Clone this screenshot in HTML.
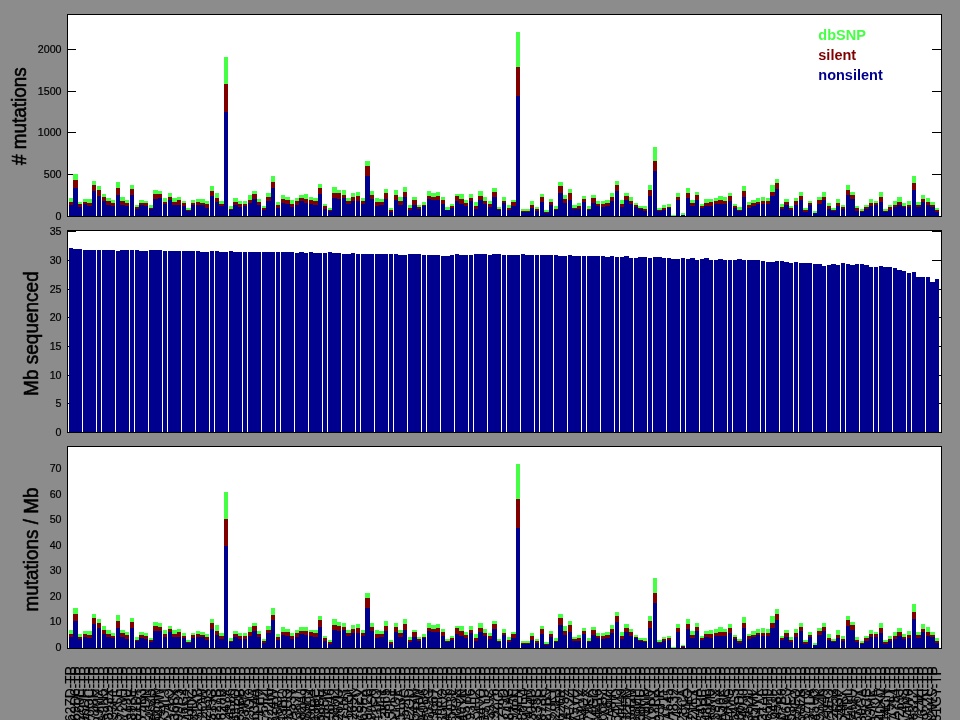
<!DOCTYPE html>
<html><head><meta charset="utf-8"><title>mutation rates</title>
<style>html,body{margin:0;padding:0;background:#8c8c8c;overflow:hidden}svg{display:block;will-change:transform}text{font-family:"Liberation Sans", sans-serif}</style>
</head><body>
<svg width="960" height="720" viewBox="0 0 960 720">
<rect x="0" y="0" width="960" height="720" fill="#8c8c8c"/>
<g shape-rendering="crispEdges">
<rect x="67" y="14" width="875" height="203" fill="#fff"/>
<rect x="67" y="230" width="875" height="203" fill="#fff"/>
<rect x="67" y="446" width="875" height="203" fill="#fff"/>
<g fill="#000">
<rect x="68" y="216" width="8" height="1"/>
<rect x="932" y="216" width="9" height="1"/>
<rect x="68" y="174" width="8" height="1"/>
<rect x="932" y="174" width="9" height="1"/>
<rect x="68" y="132" width="8" height="1"/>
<rect x="932" y="132" width="9" height="1"/>
<rect x="68" y="91" width="8" height="1"/>
<rect x="932" y="91" width="9" height="1"/>
<rect x="68" y="49" width="8" height="1"/>
<rect x="932" y="49" width="9" height="1"/>
<rect x="68" y="432" width="8" height="1"/>
<rect x="932" y="432" width="9" height="1"/>
<rect x="68" y="403" width="8" height="1"/>
<rect x="932" y="403" width="9" height="1"/>
<rect x="68" y="375" width="8" height="1"/>
<rect x="932" y="375" width="9" height="1"/>
<rect x="68" y="346" width="8" height="1"/>
<rect x="932" y="346" width="9" height="1"/>
<rect x="68" y="317" width="8" height="1"/>
<rect x="932" y="317" width="9" height="1"/>
<rect x="68" y="289" width="8" height="1"/>
<rect x="932" y="289" width="9" height="1"/>
<rect x="68" y="260" width="8" height="1"/>
<rect x="932" y="260" width="9" height="1"/>
<rect x="68" y="231" width="8" height="1"/>
<rect x="932" y="231" width="9" height="1"/>
</g>
<g fill="#45ff45">
<rect x="69" y="198" width="4" height="4"/>
<rect x="73" y="174" width="5" height="6"/>
<rect x="78" y="202" width="4" height="2"/>
<rect x="83" y="199" width="4" height="3"/>
<rect x="87" y="199" width="5" height="4"/>
<rect x="92" y="181" width="4" height="4"/>
<rect x="97" y="186" width="4" height="4"/>
<rect x="102" y="194" width="4" height="3"/>
<rect x="106" y="198" width="5" height="3"/>
<rect x="111" y="200" width="4" height="3"/>
<rect x="116" y="182" width="4" height="6"/>
<rect x="120" y="197" width="5" height="4"/>
<rect x="125" y="200" width="4" height="3"/>
<rect x="130" y="185" width="4" height="4"/>
<rect x="135" y="205" width="4" height="2"/>
<rect x="139" y="200" width="5" height="3"/>
<rect x="144" y="201" width="4" height="2"/>
<rect x="149" y="205" width="4" height="3"/>
<rect x="153" y="190" width="5" height="4"/>
<rect x="158" y="191" width="4" height="3"/>
<rect x="163" y="198" width="4" height="4"/>
<rect x="168" y="193" width="4" height="4"/>
<rect x="172" y="198" width="5" height="4"/>
<rect x="177" y="197" width="4" height="3"/>
<rect x="182" y="201" width="4" height="2"/>
<rect x="186" y="208" width="5" height="2"/>
<rect x="191" y="200" width="4" height="3"/>
<rect x="196" y="199" width="4" height="3"/>
<rect x="200" y="199" width="5" height="4"/>
<rect x="205" y="201" width="4" height="3"/>
<rect x="210" y="186" width="4" height="5"/>
<rect x="215" y="193" width="4" height="5"/>
<rect x="219" y="201" width="5" height="3"/>
<rect x="224" y="57" width="4" height="27"/>
<rect x="229" y="206" width="4" height="3"/>
<rect x="233" y="198" width="5" height="4"/>
<rect x="238" y="201" width="4" height="3"/>
<rect x="243" y="201" width="4" height="3"/>
<rect x="248" y="195" width="4" height="5"/>
<rect x="252" y="191" width="5" height="3"/>
<rect x="257" y="199" width="4" height="3"/>
<rect x="262" y="206" width="4" height="2"/>
<rect x="266" y="193" width="5" height="4"/>
<rect x="271" y="176" width="4" height="6"/>
<rect x="276" y="202" width="4" height="3"/>
<rect x="281" y="195" width="4" height="4"/>
<rect x="285" y="197" width="5" height="3"/>
<rect x="290" y="200" width="4" height="4"/>
<rect x="295" y="198" width="4" height="3"/>
<rect x="299" y="195" width="5" height="3"/>
<rect x="304" y="194" width="4" height="5"/>
<rect x="309" y="197" width="4" height="3"/>
<rect x="313" y="198" width="5" height="3"/>
<rect x="318" y="184" width="4" height="4"/>
<rect x="323" y="204" width="4" height="2"/>
<rect x="328" y="208" width="4" height="2"/>
<rect x="332" y="187" width="5" height="6"/>
<rect x="337" y="190" width="4" height="3"/>
<rect x="342" y="190" width="4" height="5"/>
<rect x="346" y="198" width="5" height="3"/>
<rect x="351" y="193" width="4" height="4"/>
<rect x="356" y="192" width="4" height="4"/>
<rect x="361" y="198" width="4" height="3"/>
<rect x="365" y="161" width="5" height="5"/>
<rect x="370" y="191" width="4" height="4"/>
<rect x="375" y="198" width="4" height="4"/>
<rect x="379" y="199" width="5" height="3"/>
<rect x="384" y="189" width="4" height="4"/>
<rect x="389" y="208" width="4" height="2"/>
<rect x="394" y="190" width="4" height="5"/>
<rect x="398" y="197" width="5" height="4"/>
<rect x="403" y="187" width="4" height="5"/>
<rect x="408" y="205" width="4" height="3"/>
<rect x="412" y="197" width="5" height="3"/>
<rect x="417" y="205" width="4" height="2"/>
<rect x="422" y="202" width="4" height="3"/>
<rect x="427" y="191" width="4" height="5"/>
<rect x="431" y="193" width="5" height="4"/>
<rect x="436" y="192" width="4" height="4"/>
<rect x="441" y="197" width="4" height="3"/>
<rect x="445" y="207" width="5" height="3"/>
<rect x="450" y="204" width="4" height="2"/>
<rect x="455" y="194" width="4" height="2"/>
<rect x="459" y="194" width="5" height="5"/>
<rect x="464" y="200" width="4" height="3"/>
<rect x="469" y="194" width="4" height="4"/>
<rect x="474" y="202" width="4" height="4"/>
<rect x="478" y="191" width="5" height="5"/>
<rect x="483" y="197" width="4" height="4"/>
<rect x="488" y="201" width="4" height="3"/>
<rect x="492" y="188" width="5" height="4"/>
<rect x="497" y="207" width="4" height="2"/>
<rect x="502" y="197" width="4" height="4"/>
<rect x="507" y="205" width="4" height="3"/>
<rect x="511" y="200" width="5" height="2"/>
<rect x="516" y="32" width="4" height="35"/>
<rect x="521" y="209" width="4" height="2"/>
<rect x="525" y="209" width="5" height="2"/>
<rect x="530" y="201" width="4" height="4"/>
<rect x="535" y="207" width="4" height="2"/>
<rect x="540" y="194" width="4" height="3"/>
<rect x="544" y="210" width="5" height="2"/>
<rect x="549" y="199" width="4" height="3"/>
<rect x="554" y="206" width="4" height="3"/>
<rect x="558" y="182" width="5" height="4"/>
<rect x="563" y="195" width="4" height="4"/>
<rect x="568" y="189" width="4" height="4"/>
<rect x="572" y="205" width="5" height="3"/>
<rect x="577" y="203" width="4" height="3"/>
<rect x="582" y="196" width="4" height="3"/>
<rect x="587" y="206" width="4" height="3"/>
<rect x="591" y="195" width="5" height="3"/>
<rect x="596" y="201" width="4" height="3"/>
<rect x="601" y="201" width="4" height="3"/>
<rect x="605" y="200" width="5" height="3"/>
<rect x="610" y="193" width="4" height="4"/>
<rect x="615" y="181" width="4" height="4"/>
<rect x="620" y="200" width="4" height="4"/>
<rect x="624" y="193" width="5" height="3"/>
<rect x="629" y="197" width="4" height="4"/>
<rect x="634" y="203" width="4" height="2"/>
<rect x="638" y="206" width="5" height="2"/>
<rect x="643" y="206" width="4" height="3"/>
<rect x="648" y="185" width="4" height="5"/>
<rect x="653" y="147" width="4" height="14"/>
<rect x="657" y="208" width="5" height="2"/>
<rect x="662" y="205" width="4" height="3"/>
<rect x="667" y="204" width="4" height="3"/>
<rect x="671" y="215" width="5" height="1"/>
<rect x="676" y="193" width="4" height="4"/>
<rect x="681" y="213" width="4" height="2"/>
<rect x="686" y="188" width="4" height="5"/>
<rect x="690" y="200" width="5" height="3"/>
<rect x="695" y="192" width="4" height="3"/>
<rect x="700" y="204" width="4" height="2"/>
<rect x="704" y="199" width="5" height="4"/>
<rect x="709" y="199" width="4" height="3"/>
<rect x="714" y="198" width="4" height="3"/>
<rect x="718" y="196" width="5" height="4"/>
<rect x="723" y="197" width="4" height="4"/>
<rect x="728" y="193" width="4" height="3"/>
<rect x="733" y="204" width="4" height="2"/>
<rect x="737" y="207" width="5" height="3"/>
<rect x="742" y="186" width="4" height="5"/>
<rect x="747" y="202" width="4" height="3"/>
<rect x="751" y="200" width="5" height="3"/>
<rect x="756" y="198" width="4" height="4"/>
<rect x="761" y="197" width="4" height="4"/>
<rect x="766" y="198" width="4" height="3"/>
<rect x="770" y="185" width="5" height="7"/>
<rect x="775" y="179" width="4" height="4"/>
<rect x="780" y="204" width="4" height="3"/>
<rect x="784" y="199" width="5" height="3"/>
<rect x="789" y="206" width="4" height="2"/>
<rect x="794" y="198" width="4" height="3"/>
<rect x="799" y="192" width="4" height="4"/>
<rect x="803" y="208" width="5" height="2"/>
<rect x="808" y="201" width="4" height="2"/>
<rect x="813" y="211" width="4" height="2"/>
<rect x="817" y="197" width="5" height="3"/>
<rect x="822" y="192" width="4" height="5"/>
<rect x="827" y="203" width="4" height="3"/>
<rect x="831" y="208" width="5" height="2"/>
<rect x="836" y="199" width="4" height="4"/>
<rect x="841" y="205" width="4" height="2"/>
<rect x="846" y="185" width="4" height="5"/>
<rect x="850" y="192" width="5" height="3"/>
<rect x="855" y="206" width="4" height="2"/>
<rect x="860" y="209" width="4" height="2"/>
<rect x="864" y="205" width="5" height="2"/>
<rect x="869" y="199" width="4" height="4"/>
<rect x="874" y="201" width="4" height="2"/>
<rect x="879" y="192" width="4" height="5"/>
<rect x="883" y="209" width="5" height="2"/>
<rect x="888" y="205" width="4" height="2"/>
<rect x="893" y="201" width="4" height="4"/>
<rect x="897" y="197" width="5" height="5"/>
<rect x="902" y="203" width="4" height="3"/>
<rect x="907" y="201" width="4" height="4"/>
<rect x="912" y="176" width="4" height="7"/>
<rect x="916" y="202" width="5" height="3"/>
<rect x="921" y="195" width="4" height="4"/>
<rect x="926" y="198" width="4" height="4"/>
<rect x="930" y="202" width="5" height="3"/>
<rect x="935" y="208" width="4" height="2"/>
</g>
<g fill="#800000">
<rect x="69" y="202" width="4" height="3"/>
<rect x="73" y="180" width="5" height="8"/>
<rect x="78" y="204" width="4" height="3"/>
<rect x="83" y="202" width="4" height="2"/>
<rect x="87" y="203" width="5" height="3"/>
<rect x="92" y="185" width="4" height="6"/>
<rect x="97" y="190" width="4" height="6"/>
<rect x="102" y="197" width="4" height="4"/>
<rect x="106" y="201" width="5" height="4"/>
<rect x="111" y="203" width="4" height="3"/>
<rect x="116" y="188" width="4" height="7"/>
<rect x="120" y="201" width="5" height="4"/>
<rect x="125" y="203" width="4" height="3"/>
<rect x="130" y="189" width="4" height="6"/>
<rect x="135" y="207" width="4" height="2"/>
<rect x="139" y="203" width="5" height="2"/>
<rect x="144" y="203" width="4" height="3"/>
<rect x="149" y="208" width="4" height="1"/>
<rect x="153" y="194" width="5" height="5"/>
<rect x="158" y="194" width="4" height="4"/>
<rect x="163" y="202" width="4" height="2"/>
<rect x="168" y="197" width="4" height="3"/>
<rect x="172" y="202" width="5" height="3"/>
<rect x="177" y="200" width="4" height="5"/>
<rect x="182" y="203" width="4" height="3"/>
<rect x="186" y="210" width="5" height="1"/>
<rect x="191" y="203" width="4" height="2"/>
<rect x="196" y="202" width="4" height="3"/>
<rect x="200" y="203" width="5" height="2"/>
<rect x="205" y="204" width="4" height="4"/>
<rect x="210" y="191" width="4" height="5"/>
<rect x="215" y="198" width="4" height="4"/>
<rect x="219" y="204" width="5" height="2"/>
<rect x="224" y="84" width="4" height="28"/>
<rect x="229" y="209" width="4" height="1"/>
<rect x="233" y="202" width="5" height="3"/>
<rect x="238" y="204" width="4" height="3"/>
<rect x="243" y="204" width="4" height="2"/>
<rect x="248" y="200" width="4" height="3"/>
<rect x="252" y="194" width="5" height="5"/>
<rect x="257" y="202" width="4" height="3"/>
<rect x="262" y="208" width="4" height="2"/>
<rect x="266" y="197" width="5" height="4"/>
<rect x="271" y="182" width="4" height="6"/>
<rect x="276" y="205" width="4" height="3"/>
<rect x="281" y="199" width="4" height="4"/>
<rect x="285" y="200" width="5" height="4"/>
<rect x="290" y="204" width="4" height="3"/>
<rect x="295" y="201" width="4" height="4"/>
<rect x="299" y="198" width="5" height="3"/>
<rect x="304" y="199" width="4" height="4"/>
<rect x="309" y="200" width="4" height="4"/>
<rect x="313" y="201" width="5" height="4"/>
<rect x="318" y="188" width="4" height="6"/>
<rect x="323" y="206" width="4" height="3"/>
<rect x="328" y="210" width="4" height="1"/>
<rect x="332" y="193" width="5" height="5"/>
<rect x="337" y="193" width="4" height="6"/>
<rect x="342" y="195" width="4" height="3"/>
<rect x="346" y="201" width="5" height="3"/>
<rect x="351" y="197" width="4" height="4"/>
<rect x="356" y="196" width="4" height="5"/>
<rect x="361" y="201" width="4" height="3"/>
<rect x="365" y="166" width="5" height="10"/>
<rect x="370" y="195" width="4" height="4"/>
<rect x="375" y="202" width="4" height="4"/>
<rect x="379" y="202" width="5" height="3"/>
<rect x="384" y="193" width="4" height="6"/>
<rect x="389" y="210" width="4" height="2"/>
<rect x="394" y="195" width="4" height="5"/>
<rect x="398" y="201" width="5" height="4"/>
<rect x="403" y="192" width="4" height="5"/>
<rect x="408" y="208" width="4" height="2"/>
<rect x="412" y="200" width="5" height="5"/>
<rect x="417" y="207" width="4" height="2"/>
<rect x="422" y="205" width="4" height="1"/>
<rect x="427" y="196" width="4" height="3"/>
<rect x="431" y="197" width="5" height="3"/>
<rect x="436" y="196" width="4" height="4"/>
<rect x="441" y="200" width="4" height="4"/>
<rect x="450" y="206" width="4" height="2"/>
<rect x="455" y="196" width="4" height="5"/>
<rect x="459" y="199" width="5" height="5"/>
<rect x="464" y="203" width="4" height="3"/>
<rect x="469" y="198" width="4" height="3"/>
<rect x="474" y="206" width="4" height="3"/>
<rect x="478" y="196" width="5" height="4"/>
<rect x="483" y="201" width="4" height="3"/>
<rect x="488" y="204" width="4" height="3"/>
<rect x="492" y="192" width="5" height="5"/>
<rect x="497" y="209" width="4" height="1"/>
<rect x="502" y="201" width="4" height="2"/>
<rect x="507" y="208" width="4" height="2"/>
<rect x="511" y="202" width="5" height="4"/>
<rect x="516" y="67" width="4" height="29"/>
<rect x="521" y="211" width="4" height="1"/>
<rect x="525" y="211" width="5" height="1"/>
<rect x="530" y="205" width="4" height="3"/>
<rect x="535" y="209" width="4" height="2"/>
<rect x="540" y="197" width="4" height="5"/>
<rect x="544" y="212" width="5" height="1"/>
<rect x="549" y="202" width="4" height="3"/>
<rect x="554" y="209" width="4" height="1"/>
<rect x="558" y="186" width="5" height="7"/>
<rect x="563" y="199" width="4" height="4"/>
<rect x="568" y="193" width="4" height="7"/>
<rect x="572" y="208" width="5" height="1"/>
<rect x="577" y="206" width="4" height="3"/>
<rect x="582" y="199" width="4" height="3"/>
<rect x="587" y="209" width="4" height="1"/>
<rect x="591" y="198" width="5" height="5"/>
<rect x="596" y="204" width="4" height="2"/>
<rect x="601" y="204" width="4" height="3"/>
<rect x="605" y="203" width="5" height="3"/>
<rect x="610" y="197" width="4" height="4"/>
<rect x="615" y="185" width="4" height="6"/>
<rect x="620" y="204" width="4" height="3"/>
<rect x="624" y="196" width="5" height="4"/>
<rect x="629" y="201" width="4" height="3"/>
<rect x="634" y="205" width="4" height="2"/>
<rect x="638" y="208" width="5" height="1"/>
<rect x="643" y="209" width="4" height="2"/>
<rect x="648" y="190" width="4" height="6"/>
<rect x="653" y="161" width="4" height="10"/>
<rect x="657" y="210" width="5" height="1"/>
<rect x="662" y="208" width="4" height="2"/>
<rect x="667" y="207" width="4" height="1"/>
<rect x="676" y="197" width="4" height="3"/>
<rect x="686" y="193" width="4" height="5"/>
<rect x="690" y="203" width="5" height="3"/>
<rect x="695" y="195" width="4" height="5"/>
<rect x="700" y="206" width="4" height="2"/>
<rect x="704" y="203" width="5" height="3"/>
<rect x="709" y="202" width="4" height="4"/>
<rect x="714" y="201" width="4" height="3"/>
<rect x="718" y="200" width="5" height="4"/>
<rect x="723" y="201" width="4" height="3"/>
<rect x="728" y="196" width="4" height="5"/>
<rect x="733" y="206" width="4" height="2"/>
<rect x="737" y="210" width="5" height="1"/>
<rect x="742" y="191" width="4" height="6"/>
<rect x="747" y="205" width="4" height="3"/>
<rect x="751" y="203" width="5" height="3"/>
<rect x="756" y="202" width="4" height="2"/>
<rect x="761" y="201" width="4" height="3"/>
<rect x="766" y="201" width="4" height="3"/>
<rect x="770" y="192" width="5" height="4"/>
<rect x="775" y="183" width="4" height="6"/>
<rect x="780" y="207" width="4" height="2"/>
<rect x="784" y="202" width="5" height="3"/>
<rect x="789" y="208" width="4" height="2"/>
<rect x="794" y="201" width="4" height="4"/>
<rect x="799" y="196" width="4" height="4"/>
<rect x="803" y="210" width="5" height="2"/>
<rect x="808" y="203" width="4" height="2"/>
<rect x="817" y="200" width="5" height="4"/>
<rect x="822" y="197" width="4" height="3"/>
<rect x="827" y="206" width="4" height="3"/>
<rect x="831" y="210" width="5" height="1"/>
<rect x="836" y="203" width="4" height="3"/>
<rect x="841" y="207" width="4" height="2"/>
<rect x="846" y="190" width="4" height="5"/>
<rect x="850" y="195" width="5" height="4"/>
<rect x="855" y="208" width="4" height="3"/>
<rect x="860" y="211" width="4" height="1"/>
<rect x="864" y="207" width="5" height="2"/>
<rect x="869" y="203" width="4" height="3"/>
<rect x="874" y="203" width="4" height="2"/>
<rect x="879" y="197" width="4" height="5"/>
<rect x="883" y="211" width="5" height="1"/>
<rect x="888" y="207" width="4" height="3"/>
<rect x="893" y="205" width="4" height="2"/>
<rect x="897" y="202" width="5" height="3"/>
<rect x="902" y="206" width="4" height="1"/>
<rect x="907" y="205" width="4" height="2"/>
<rect x="912" y="183" width="4" height="7"/>
<rect x="916" y="205" width="5" height="2"/>
<rect x="921" y="199" width="4" height="3"/>
<rect x="926" y="202" width="4" height="3"/>
<rect x="930" y="205" width="5" height="2"/>
<rect x="935" y="210" width="4" height="2"/>
</g>
<g fill="#00008f">
<rect x="69" y="205" width="4" height="11"/>
<rect x="73" y="188" width="5" height="28"/>
<rect x="78" y="207" width="4" height="9"/>
<rect x="83" y="204" width="4" height="12"/>
<rect x="87" y="206" width="5" height="10"/>
<rect x="92" y="191" width="4" height="25"/>
<rect x="97" y="196" width="4" height="20"/>
<rect x="102" y="201" width="4" height="15"/>
<rect x="106" y="205" width="5" height="11"/>
<rect x="111" y="206" width="4" height="10"/>
<rect x="116" y="195" width="4" height="21"/>
<rect x="120" y="205" width="5" height="11"/>
<rect x="125" y="206" width="4" height="10"/>
<rect x="130" y="195" width="4" height="21"/>
<rect x="135" y="209" width="4" height="7"/>
<rect x="139" y="205" width="5" height="11"/>
<rect x="144" y="206" width="4" height="10"/>
<rect x="149" y="209" width="4" height="7"/>
<rect x="153" y="199" width="5" height="17"/>
<rect x="158" y="198" width="4" height="18"/>
<rect x="163" y="204" width="4" height="12"/>
<rect x="168" y="200" width="4" height="16"/>
<rect x="172" y="205" width="5" height="11"/>
<rect x="177" y="205" width="4" height="11"/>
<rect x="182" y="206" width="4" height="10"/>
<rect x="186" y="211" width="5" height="5"/>
<rect x="191" y="205" width="4" height="11"/>
<rect x="196" y="205" width="4" height="11"/>
<rect x="200" y="205" width="5" height="11"/>
<rect x="205" y="208" width="4" height="8"/>
<rect x="210" y="196" width="4" height="20"/>
<rect x="215" y="202" width="4" height="14"/>
<rect x="219" y="206" width="5" height="10"/>
<rect x="224" y="112" width="4" height="104"/>
<rect x="229" y="210" width="4" height="6"/>
<rect x="233" y="205" width="5" height="11"/>
<rect x="238" y="207" width="4" height="9"/>
<rect x="243" y="206" width="4" height="10"/>
<rect x="248" y="203" width="4" height="13"/>
<rect x="252" y="199" width="5" height="17"/>
<rect x="257" y="205" width="4" height="11"/>
<rect x="262" y="210" width="4" height="6"/>
<rect x="266" y="201" width="5" height="15"/>
<rect x="271" y="188" width="4" height="28"/>
<rect x="276" y="208" width="4" height="8"/>
<rect x="281" y="203" width="4" height="13"/>
<rect x="285" y="204" width="5" height="12"/>
<rect x="290" y="207" width="4" height="9"/>
<rect x="295" y="205" width="4" height="11"/>
<rect x="299" y="201" width="5" height="15"/>
<rect x="304" y="203" width="4" height="13"/>
<rect x="309" y="204" width="4" height="12"/>
<rect x="313" y="205" width="5" height="11"/>
<rect x="318" y="194" width="4" height="22"/>
<rect x="323" y="209" width="4" height="7"/>
<rect x="328" y="211" width="4" height="5"/>
<rect x="332" y="198" width="5" height="18"/>
<rect x="337" y="199" width="4" height="17"/>
<rect x="342" y="198" width="4" height="18"/>
<rect x="346" y="204" width="5" height="12"/>
<rect x="351" y="201" width="4" height="15"/>
<rect x="356" y="201" width="4" height="15"/>
<rect x="361" y="204" width="4" height="12"/>
<rect x="365" y="176" width="5" height="40"/>
<rect x="370" y="199" width="4" height="17"/>
<rect x="375" y="206" width="4" height="10"/>
<rect x="379" y="205" width="5" height="11"/>
<rect x="384" y="199" width="4" height="17"/>
<rect x="389" y="212" width="4" height="4"/>
<rect x="394" y="200" width="4" height="16"/>
<rect x="398" y="205" width="5" height="11"/>
<rect x="403" y="197" width="4" height="19"/>
<rect x="408" y="210" width="4" height="6"/>
<rect x="412" y="205" width="5" height="11"/>
<rect x="417" y="209" width="4" height="7"/>
<rect x="422" y="206" width="4" height="10"/>
<rect x="427" y="199" width="4" height="17"/>
<rect x="431" y="200" width="5" height="16"/>
<rect x="436" y="200" width="4" height="16"/>
<rect x="441" y="204" width="4" height="12"/>
<rect x="445" y="210" width="5" height="6"/>
<rect x="450" y="208" width="4" height="8"/>
<rect x="455" y="201" width="4" height="15"/>
<rect x="459" y="204" width="5" height="12"/>
<rect x="464" y="206" width="4" height="10"/>
<rect x="469" y="201" width="4" height="15"/>
<rect x="474" y="209" width="4" height="7"/>
<rect x="478" y="200" width="5" height="16"/>
<rect x="483" y="204" width="4" height="12"/>
<rect x="488" y="207" width="4" height="9"/>
<rect x="492" y="197" width="5" height="19"/>
<rect x="497" y="210" width="4" height="6"/>
<rect x="502" y="203" width="4" height="13"/>
<rect x="507" y="210" width="4" height="6"/>
<rect x="511" y="206" width="5" height="10"/>
<rect x="516" y="96" width="4" height="120"/>
<rect x="521" y="212" width="4" height="4"/>
<rect x="525" y="212" width="5" height="4"/>
<rect x="530" y="208" width="4" height="8"/>
<rect x="535" y="211" width="4" height="5"/>
<rect x="540" y="202" width="4" height="14"/>
<rect x="544" y="213" width="5" height="3"/>
<rect x="549" y="205" width="4" height="11"/>
<rect x="554" y="210" width="4" height="6"/>
<rect x="558" y="193" width="5" height="23"/>
<rect x="563" y="203" width="4" height="13"/>
<rect x="568" y="200" width="4" height="16"/>
<rect x="572" y="209" width="5" height="7"/>
<rect x="577" y="209" width="4" height="7"/>
<rect x="582" y="202" width="4" height="14"/>
<rect x="587" y="210" width="4" height="6"/>
<rect x="591" y="203" width="5" height="13"/>
<rect x="596" y="206" width="4" height="10"/>
<rect x="601" y="207" width="4" height="9"/>
<rect x="605" y="206" width="5" height="10"/>
<rect x="610" y="201" width="4" height="15"/>
<rect x="615" y="191" width="4" height="25"/>
<rect x="620" y="207" width="4" height="9"/>
<rect x="624" y="200" width="5" height="16"/>
<rect x="629" y="204" width="4" height="12"/>
<rect x="634" y="207" width="4" height="9"/>
<rect x="638" y="209" width="5" height="7"/>
<rect x="643" y="211" width="4" height="5"/>
<rect x="648" y="196" width="4" height="20"/>
<rect x="653" y="171" width="4" height="45"/>
<rect x="657" y="211" width="5" height="5"/>
<rect x="662" y="210" width="4" height="6"/>
<rect x="667" y="208" width="4" height="8"/>
<rect x="676" y="200" width="4" height="16"/>
<rect x="681" y="215" width="4" height="1"/>
<rect x="686" y="198" width="4" height="18"/>
<rect x="690" y="206" width="5" height="10"/>
<rect x="695" y="200" width="4" height="16"/>
<rect x="700" y="208" width="4" height="8"/>
<rect x="704" y="206" width="5" height="10"/>
<rect x="709" y="206" width="4" height="10"/>
<rect x="714" y="204" width="4" height="12"/>
<rect x="718" y="204" width="5" height="12"/>
<rect x="723" y="204" width="4" height="12"/>
<rect x="728" y="201" width="4" height="15"/>
<rect x="733" y="208" width="4" height="8"/>
<rect x="737" y="211" width="5" height="5"/>
<rect x="742" y="197" width="4" height="19"/>
<rect x="747" y="208" width="4" height="8"/>
<rect x="751" y="206" width="5" height="10"/>
<rect x="756" y="204" width="4" height="12"/>
<rect x="761" y="204" width="4" height="12"/>
<rect x="766" y="204" width="4" height="12"/>
<rect x="770" y="196" width="5" height="20"/>
<rect x="775" y="189" width="4" height="27"/>
<rect x="780" y="209" width="4" height="7"/>
<rect x="784" y="205" width="5" height="11"/>
<rect x="789" y="210" width="4" height="6"/>
<rect x="794" y="205" width="4" height="11"/>
<rect x="799" y="200" width="4" height="16"/>
<rect x="803" y="212" width="5" height="4"/>
<rect x="808" y="205" width="4" height="11"/>
<rect x="813" y="213" width="4" height="3"/>
<rect x="817" y="204" width="5" height="12"/>
<rect x="822" y="200" width="4" height="16"/>
<rect x="827" y="209" width="4" height="7"/>
<rect x="831" y="211" width="5" height="5"/>
<rect x="836" y="206" width="4" height="10"/>
<rect x="841" y="209" width="4" height="7"/>
<rect x="846" y="195" width="4" height="21"/>
<rect x="850" y="199" width="5" height="17"/>
<rect x="855" y="211" width="4" height="5"/>
<rect x="860" y="212" width="4" height="4"/>
<rect x="864" y="209" width="5" height="7"/>
<rect x="869" y="206" width="4" height="10"/>
<rect x="874" y="205" width="4" height="11"/>
<rect x="879" y="202" width="4" height="14"/>
<rect x="883" y="212" width="5" height="4"/>
<rect x="888" y="210" width="4" height="6"/>
<rect x="893" y="207" width="4" height="9"/>
<rect x="897" y="205" width="5" height="11"/>
<rect x="902" y="207" width="4" height="9"/>
<rect x="907" y="207" width="4" height="9"/>
<rect x="912" y="190" width="4" height="26"/>
<rect x="916" y="207" width="5" height="9"/>
<rect x="921" y="202" width="4" height="14"/>
<rect x="926" y="205" width="4" height="11"/>
<rect x="930" y="207" width="5" height="9"/>
<rect x="935" y="212" width="4" height="4"/>
</g>
<g fill="#00008f">
<rect x="69" y="248" width="4" height="184"/>
<rect x="73" y="249" width="5" height="183"/>
<rect x="78" y="249" width="4" height="183"/>
<rect x="83" y="250" width="4" height="182"/>
<rect x="87" y="250" width="5" height="182"/>
<rect x="92" y="250" width="4" height="182"/>
<rect x="97" y="250" width="4" height="182"/>
<rect x="102" y="250" width="4" height="182"/>
<rect x="106" y="250" width="5" height="182"/>
<rect x="111" y="250" width="4" height="182"/>
<rect x="116" y="251" width="4" height="181"/>
<rect x="120" y="250" width="5" height="182"/>
<rect x="125" y="250" width="4" height="182"/>
<rect x="130" y="250" width="4" height="182"/>
<rect x="135" y="250" width="4" height="182"/>
<rect x="139" y="251" width="5" height="181"/>
<rect x="144" y="251" width="4" height="181"/>
<rect x="149" y="250" width="4" height="182"/>
<rect x="153" y="250" width="5" height="182"/>
<rect x="158" y="250" width="4" height="182"/>
<rect x="163" y="251" width="4" height="181"/>
<rect x="168" y="251" width="4" height="181"/>
<rect x="172" y="251" width="5" height="181"/>
<rect x="177" y="251" width="4" height="181"/>
<rect x="182" y="251" width="4" height="181"/>
<rect x="186" y="251" width="5" height="181"/>
<rect x="191" y="251" width="4" height="181"/>
<rect x="196" y="251" width="4" height="181"/>
<rect x="200" y="252" width="5" height="180"/>
<rect x="205" y="252" width="4" height="180"/>
<rect x="210" y="251" width="4" height="181"/>
<rect x="215" y="251" width="4" height="181"/>
<rect x="219" y="252" width="5" height="180"/>
<rect x="224" y="252" width="4" height="180"/>
<rect x="229" y="251" width="4" height="181"/>
<rect x="233" y="252" width="5" height="180"/>
<rect x="238" y="252" width="4" height="180"/>
<rect x="243" y="252" width="4" height="180"/>
<rect x="248" y="252" width="4" height="180"/>
<rect x="252" y="252" width="5" height="180"/>
<rect x="257" y="252" width="4" height="180"/>
<rect x="262" y="252" width="4" height="180"/>
<rect x="266" y="252" width="5" height="180"/>
<rect x="271" y="252" width="4" height="180"/>
<rect x="276" y="252" width="4" height="180"/>
<rect x="281" y="252" width="4" height="180"/>
<rect x="285" y="252" width="5" height="180"/>
<rect x="290" y="252" width="4" height="180"/>
<rect x="295" y="253" width="4" height="179"/>
<rect x="299" y="252" width="5" height="180"/>
<rect x="304" y="253" width="4" height="179"/>
<rect x="309" y="252" width="4" height="180"/>
<rect x="313" y="253" width="5" height="179"/>
<rect x="318" y="253" width="4" height="179"/>
<rect x="323" y="253" width="4" height="179"/>
<rect x="328" y="252" width="4" height="180"/>
<rect x="332" y="253" width="5" height="179"/>
<rect x="337" y="253" width="4" height="179"/>
<rect x="342" y="254" width="4" height="178"/>
<rect x="346" y="254" width="5" height="178"/>
<rect x="351" y="253" width="4" height="179"/>
<rect x="356" y="254" width="4" height="178"/>
<rect x="361" y="254" width="4" height="178"/>
<rect x="365" y="254" width="5" height="178"/>
<rect x="370" y="254" width="4" height="178"/>
<rect x="375" y="254" width="4" height="178"/>
<rect x="379" y="254" width="5" height="178"/>
<rect x="384" y="254" width="4" height="178"/>
<rect x="389" y="254" width="4" height="178"/>
<rect x="394" y="254" width="4" height="178"/>
<rect x="398" y="255" width="5" height="177"/>
<rect x="403" y="255" width="4" height="177"/>
<rect x="408" y="254" width="4" height="178"/>
<rect x="412" y="254" width="5" height="178"/>
<rect x="417" y="254" width="4" height="178"/>
<rect x="422" y="255" width="4" height="177"/>
<rect x="427" y="255" width="4" height="177"/>
<rect x="431" y="255" width="5" height="177"/>
<rect x="436" y="255" width="4" height="177"/>
<rect x="441" y="256" width="4" height="176"/>
<rect x="445" y="256" width="5" height="176"/>
<rect x="450" y="255" width="4" height="177"/>
<rect x="455" y="254" width="4" height="178"/>
<rect x="459" y="255" width="5" height="177"/>
<rect x="464" y="255" width="4" height="177"/>
<rect x="469" y="255" width="4" height="177"/>
<rect x="474" y="254" width="4" height="178"/>
<rect x="478" y="254" width="5" height="178"/>
<rect x="483" y="254" width="4" height="178"/>
<rect x="488" y="255" width="4" height="177"/>
<rect x="492" y="254" width="5" height="178"/>
<rect x="497" y="254" width="4" height="178"/>
<rect x="502" y="255" width="4" height="177"/>
<rect x="507" y="255" width="4" height="177"/>
<rect x="511" y="255" width="5" height="177"/>
<rect x="516" y="255" width="4" height="177"/>
<rect x="521" y="254" width="4" height="178"/>
<rect x="525" y="255" width="5" height="177"/>
<rect x="530" y="255" width="4" height="177"/>
<rect x="535" y="255" width="4" height="177"/>
<rect x="540" y="255" width="4" height="177"/>
<rect x="544" y="255" width="5" height="177"/>
<rect x="549" y="255" width="4" height="177"/>
<rect x="554" y="255" width="4" height="177"/>
<rect x="558" y="256" width="5" height="176"/>
<rect x="563" y="256" width="4" height="176"/>
<rect x="568" y="255" width="4" height="177"/>
<rect x="572" y="256" width="5" height="176"/>
<rect x="577" y="256" width="4" height="176"/>
<rect x="582" y="256" width="4" height="176"/>
<rect x="587" y="256" width="4" height="176"/>
<rect x="591" y="256" width="5" height="176"/>
<rect x="596" y="256" width="4" height="176"/>
<rect x="601" y="256" width="4" height="176"/>
<rect x="605" y="257" width="5" height="175"/>
<rect x="610" y="256" width="4" height="176"/>
<rect x="615" y="257" width="4" height="175"/>
<rect x="620" y="257" width="4" height="175"/>
<rect x="624" y="256" width="5" height="176"/>
<rect x="629" y="258" width="4" height="174"/>
<rect x="634" y="258" width="4" height="174"/>
<rect x="638" y="257" width="5" height="175"/>
<rect x="643" y="257" width="4" height="175"/>
<rect x="648" y="258" width="4" height="174"/>
<rect x="653" y="257" width="4" height="175"/>
<rect x="657" y="257" width="5" height="175"/>
<rect x="662" y="258" width="4" height="174"/>
<rect x="667" y="258" width="4" height="174"/>
<rect x="671" y="259" width="5" height="173"/>
<rect x="676" y="259" width="4" height="173"/>
<rect x="681" y="258" width="4" height="174"/>
<rect x="686" y="259" width="4" height="173"/>
<rect x="690" y="258" width="5" height="174"/>
<rect x="695" y="260" width="4" height="172"/>
<rect x="700" y="259" width="4" height="173"/>
<rect x="704" y="258" width="5" height="174"/>
<rect x="709" y="260" width="4" height="172"/>
<rect x="714" y="260" width="4" height="172"/>
<rect x="718" y="259" width="5" height="173"/>
<rect x="723" y="260" width="4" height="172"/>
<rect x="728" y="260" width="4" height="172"/>
<rect x="733" y="260" width="4" height="172"/>
<rect x="737" y="259" width="5" height="173"/>
<rect x="742" y="260" width="4" height="172"/>
<rect x="747" y="260" width="4" height="172"/>
<rect x="751" y="260" width="5" height="172"/>
<rect x="756" y="260" width="4" height="172"/>
<rect x="761" y="261" width="4" height="171"/>
<rect x="766" y="262" width="4" height="170"/>
<rect x="770" y="262" width="5" height="170"/>
<rect x="775" y="261" width="4" height="171"/>
<rect x="780" y="261" width="4" height="171"/>
<rect x="784" y="262" width="5" height="170"/>
<rect x="789" y="263" width="4" height="169"/>
<rect x="794" y="262" width="4" height="170"/>
<rect x="799" y="263" width="4" height="169"/>
<rect x="803" y="263" width="5" height="169"/>
<rect x="808" y="263" width="4" height="169"/>
<rect x="813" y="264" width="4" height="168"/>
<rect x="817" y="264" width="5" height="168"/>
<rect x="822" y="266" width="4" height="166"/>
<rect x="827" y="265" width="4" height="167"/>
<rect x="831" y="264" width="5" height="168"/>
<rect x="836" y="265" width="4" height="167"/>
<rect x="841" y="263" width="4" height="169"/>
<rect x="846" y="264" width="4" height="168"/>
<rect x="850" y="265" width="5" height="167"/>
<rect x="855" y="264" width="4" height="168"/>
<rect x="860" y="264" width="4" height="168"/>
<rect x="864" y="265" width="5" height="167"/>
<rect x="869" y="267" width="4" height="165"/>
<rect x="874" y="267" width="4" height="165"/>
<rect x="879" y="266" width="4" height="166"/>
<rect x="883" y="267" width="5" height="165"/>
<rect x="888" y="267" width="4" height="165"/>
<rect x="893" y="268" width="4" height="164"/>
<rect x="897" y="270" width="5" height="162"/>
<rect x="902" y="271" width="4" height="161"/>
<rect x="907" y="273" width="4" height="159"/>
<rect x="912" y="272" width="4" height="160"/>
<rect x="916" y="277" width="5" height="155"/>
<rect x="921" y="277" width="4" height="155"/>
<rect x="926" y="277" width="4" height="155"/>
<rect x="930" y="282" width="5" height="150"/>
<rect x="935" y="279" width="4" height="153"/>
</g>
<g fill="#45ff45">
<rect x="69" y="630" width="4" height="4"/>
<rect x="73" y="608" width="5" height="6"/>
<rect x="78" y="634" width="4" height="3"/>
<rect x="83" y="631" width="4" height="3"/>
<rect x="87" y="631" width="5" height="4"/>
<rect x="92" y="614" width="4" height="4"/>
<rect x="97" y="619" width="4" height="4"/>
<rect x="102" y="626" width="4" height="4"/>
<rect x="106" y="630" width="5" height="4"/>
<rect x="111" y="633" width="4" height="3"/>
<rect x="116" y="615" width="4" height="6"/>
<rect x="120" y="630" width="5" height="3"/>
<rect x="125" y="632" width="4" height="3"/>
<rect x="130" y="618" width="4" height="4"/>
<rect x="135" y="637" width="4" height="3"/>
<rect x="139" y="632" width="5" height="3"/>
<rect x="144" y="633" width="4" height="3"/>
<rect x="149" y="638" width="4" height="2"/>
<rect x="153" y="622" width="5" height="4"/>
<rect x="158" y="623" width="4" height="4"/>
<rect x="163" y="630" width="4" height="4"/>
<rect x="168" y="626" width="4" height="3"/>
<rect x="172" y="630" width="5" height="4"/>
<rect x="177" y="629" width="4" height="3"/>
<rect x="182" y="633" width="4" height="3"/>
<rect x="186" y="640" width="5" height="2"/>
<rect x="191" y="633" width="4" height="2"/>
<rect x="196" y="631" width="4" height="3"/>
<rect x="200" y="632" width="5" height="3"/>
<rect x="205" y="634" width="4" height="3"/>
<rect x="210" y="619" width="4" height="4"/>
<rect x="215" y="625" width="4" height="6"/>
<rect x="219" y="633" width="5" height="3"/>
<rect x="224" y="492" width="4" height="27"/>
<rect x="229" y="638" width="4" height="3"/>
<rect x="233" y="631" width="5" height="3"/>
<rect x="238" y="633" width="4" height="3"/>
<rect x="243" y="633" width="4" height="3"/>
<rect x="248" y="627" width="4" height="5"/>
<rect x="252" y="623" width="5" height="3"/>
<rect x="257" y="631" width="4" height="3"/>
<rect x="262" y="639" width="4" height="2"/>
<rect x="266" y="626" width="5" height="4"/>
<rect x="271" y="608" width="4" height="7"/>
<rect x="276" y="634" width="4" height="3"/>
<rect x="281" y="627" width="4" height="5"/>
<rect x="285" y="629" width="5" height="3"/>
<rect x="290" y="633" width="4" height="3"/>
<rect x="295" y="630" width="4" height="3"/>
<rect x="299" y="627" width="5" height="4"/>
<rect x="304" y="627" width="4" height="4"/>
<rect x="309" y="630" width="4" height="2"/>
<rect x="313" y="630" width="5" height="3"/>
<rect x="318" y="616" width="4" height="4"/>
<rect x="323" y="636" width="4" height="2"/>
<rect x="328" y="640" width="4" height="2"/>
<rect x="332" y="619" width="5" height="6"/>
<rect x="337" y="622" width="4" height="4"/>
<rect x="342" y="623" width="4" height="4"/>
<rect x="346" y="630" width="5" height="3"/>
<rect x="351" y="625" width="4" height="4"/>
<rect x="356" y="624" width="4" height="4"/>
<rect x="361" y="630" width="4" height="3"/>
<rect x="365" y="593" width="5" height="5"/>
<rect x="370" y="623" width="4" height="4"/>
<rect x="375" y="630" width="4" height="4"/>
<rect x="379" y="631" width="5" height="3"/>
<rect x="384" y="621" width="4" height="5"/>
<rect x="389" y="640" width="4" height="2"/>
<rect x="394" y="623" width="4" height="4"/>
<rect x="398" y="630" width="5" height="3"/>
<rect x="403" y="619" width="4" height="5"/>
<rect x="408" y="637" width="4" height="3"/>
<rect x="412" y="630" width="5" height="2"/>
<rect x="417" y="637" width="4" height="2"/>
<rect x="422" y="634" width="4" height="3"/>
<rect x="427" y="623" width="4" height="5"/>
<rect x="431" y="625" width="5" height="4"/>
<rect x="436" y="624" width="4" height="4"/>
<rect x="441" y="629" width="4" height="3"/>
<rect x="445" y="639" width="5" height="2"/>
<rect x="450" y="636" width="4" height="2"/>
<rect x="455" y="626" width="4" height="2"/>
<rect x="459" y="626" width="5" height="5"/>
<rect x="464" y="632" width="4" height="3"/>
<rect x="469" y="626" width="4" height="4"/>
<rect x="474" y="634" width="4" height="4"/>
<rect x="478" y="623" width="5" height="5"/>
<rect x="483" y="629" width="4" height="4"/>
<rect x="488" y="633" width="4" height="3"/>
<rect x="492" y="621" width="5" height="3"/>
<rect x="497" y="639" width="4" height="2"/>
<rect x="502" y="629" width="4" height="4"/>
<rect x="507" y="637" width="4" height="3"/>
<rect x="511" y="632" width="5" height="2"/>
<rect x="516" y="464" width="4" height="35"/>
<rect x="521" y="641" width="4" height="2"/>
<rect x="525" y="641" width="5" height="2"/>
<rect x="530" y="633" width="4" height="3"/>
<rect x="535" y="639" width="4" height="2"/>
<rect x="540" y="626" width="4" height="3"/>
<rect x="544" y="642" width="5" height="2"/>
<rect x="549" y="631" width="4" height="3"/>
<rect x="554" y="638" width="4" height="3"/>
<rect x="558" y="614" width="5" height="4"/>
<rect x="563" y="626" width="4" height="5"/>
<rect x="568" y="621" width="4" height="4"/>
<rect x="572" y="637" width="5" height="2"/>
<rect x="577" y="635" width="4" height="3"/>
<rect x="582" y="628" width="4" height="3"/>
<rect x="587" y="638" width="4" height="3"/>
<rect x="591" y="627" width="5" height="3"/>
<rect x="596" y="633" width="4" height="3"/>
<rect x="601" y="633" width="4" height="3"/>
<rect x="605" y="632" width="5" height="3"/>
<rect x="610" y="625" width="4" height="4"/>
<rect x="615" y="612" width="4" height="4"/>
<rect x="620" y="632" width="4" height="4"/>
<rect x="624" y="624" width="5" height="4"/>
<rect x="629" y="629" width="4" height="3"/>
<rect x="634" y="635" width="4" height="2"/>
<rect x="638" y="638" width="5" height="2"/>
<rect x="643" y="638" width="4" height="3"/>
<rect x="648" y="616" width="4" height="5"/>
<rect x="653" y="578" width="4" height="15"/>
<rect x="657" y="640" width="5" height="2"/>
<rect x="662" y="637" width="4" height="2"/>
<rect x="667" y="636" width="4" height="2"/>
<rect x="671" y="647" width="5" height="1"/>
<rect x="676" y="624" width="4" height="4"/>
<rect x="681" y="645" width="4" height="1"/>
<rect x="686" y="619" width="4" height="5"/>
<rect x="690" y="631" width="5" height="4"/>
<rect x="695" y="623" width="4" height="4"/>
<rect x="700" y="636" width="4" height="2"/>
<rect x="704" y="631" width="5" height="3"/>
<rect x="709" y="630" width="4" height="4"/>
<rect x="714" y="629" width="4" height="4"/>
<rect x="718" y="627" width="5" height="5"/>
<rect x="723" y="629" width="4" height="3"/>
<rect x="728" y="624" width="4" height="4"/>
<rect x="733" y="635" width="4" height="2"/>
<rect x="737" y="639" width="5" height="2"/>
<rect x="742" y="617" width="4" height="6"/>
<rect x="747" y="634" width="4" height="2"/>
<rect x="751" y="631" width="5" height="4"/>
<rect x="756" y="629" width="4" height="4"/>
<rect x="761" y="628" width="4" height="5"/>
<rect x="766" y="629" width="4" height="4"/>
<rect x="770" y="616" width="5" height="7"/>
<rect x="775" y="609" width="4" height="5"/>
<rect x="780" y="636" width="4" height="2"/>
<rect x="784" y="630" width="5" height="3"/>
<rect x="789" y="637" width="4" height="3"/>
<rect x="794" y="629" width="4" height="4"/>
<rect x="799" y="623" width="4" height="4"/>
<rect x="803" y="640" width="5" height="2"/>
<rect x="808" y="632" width="4" height="3"/>
<rect x="813" y="643" width="4" height="2"/>
<rect x="817" y="628" width="5" height="3"/>
<rect x="822" y="623" width="4" height="4"/>
<rect x="827" y="634" width="4" height="4"/>
<rect x="831" y="639" width="5" height="2"/>
<rect x="836" y="630" width="4" height="5"/>
<rect x="841" y="636" width="4" height="3"/>
<rect x="846" y="616" width="4" height="4"/>
<rect x="850" y="622" width="5" height="3"/>
<rect x="855" y="637" width="4" height="3"/>
<rect x="860" y="641" width="4" height="2"/>
<rect x="864" y="636" width="5" height="2"/>
<rect x="869" y="630" width="4" height="4"/>
<rect x="874" y="632" width="4" height="2"/>
<rect x="879" y="623" width="4" height="5"/>
<rect x="883" y="640" width="5" height="2"/>
<rect x="888" y="636" width="4" height="3"/>
<rect x="893" y="632" width="4" height="4"/>
<rect x="897" y="628" width="5" height="4"/>
<rect x="902" y="634" width="4" height="3"/>
<rect x="907" y="631" width="4" height="4"/>
<rect x="912" y="604" width="4" height="8"/>
<rect x="916" y="632" width="5" height="3"/>
<rect x="921" y="624" width="4" height="5"/>
<rect x="926" y="627" width="4" height="5"/>
<rect x="930" y="632" width="5" height="3"/>
<rect x="935" y="638" width="4" height="3"/>
</g>
<g fill="#800000">
<rect x="69" y="634" width="4" height="3"/>
<rect x="73" y="614" width="5" height="7"/>
<rect x="78" y="637" width="4" height="2"/>
<rect x="83" y="634" width="4" height="3"/>
<rect x="87" y="635" width="5" height="3"/>
<rect x="92" y="618" width="4" height="6"/>
<rect x="97" y="623" width="4" height="5"/>
<rect x="102" y="630" width="4" height="4"/>
<rect x="106" y="634" width="5" height="3"/>
<rect x="111" y="636" width="4" height="2"/>
<rect x="116" y="621" width="4" height="7"/>
<rect x="120" y="633" width="5" height="4"/>
<rect x="125" y="635" width="4" height="4"/>
<rect x="130" y="622" width="4" height="6"/>
<rect x="135" y="640" width="4" height="1"/>
<rect x="139" y="635" width="5" height="3"/>
<rect x="144" y="636" width="4" height="3"/>
<rect x="149" y="640" width="4" height="2"/>
<rect x="153" y="626" width="5" height="5"/>
<rect x="158" y="627" width="4" height="4"/>
<rect x="163" y="634" width="4" height="3"/>
<rect x="168" y="629" width="4" height="3"/>
<rect x="172" y="634" width="5" height="3"/>
<rect x="177" y="632" width="4" height="5"/>
<rect x="182" y="636" width="4" height="2"/>
<rect x="186" y="642" width="5" height="1"/>
<rect x="191" y="635" width="4" height="3"/>
<rect x="196" y="634" width="4" height="3"/>
<rect x="200" y="635" width="5" height="2"/>
<rect x="205" y="637" width="4" height="3"/>
<rect x="210" y="623" width="4" height="6"/>
<rect x="215" y="631" width="4" height="4"/>
<rect x="219" y="636" width="5" height="3"/>
<rect x="224" y="519" width="4" height="27"/>
<rect x="229" y="641" width="4" height="1"/>
<rect x="233" y="634" width="5" height="3"/>
<rect x="238" y="636" width="4" height="3"/>
<rect x="243" y="636" width="4" height="3"/>
<rect x="248" y="632" width="4" height="4"/>
<rect x="252" y="626" width="5" height="5"/>
<rect x="257" y="634" width="4" height="3"/>
<rect x="262" y="641" width="4" height="2"/>
<rect x="266" y="630" width="5" height="3"/>
<rect x="271" y="615" width="4" height="5"/>
<rect x="276" y="637" width="4" height="3"/>
<rect x="281" y="632" width="4" height="3"/>
<rect x="285" y="632" width="5" height="4"/>
<rect x="290" y="636" width="4" height="3"/>
<rect x="295" y="633" width="4" height="4"/>
<rect x="299" y="631" width="5" height="3"/>
<rect x="304" y="631" width="4" height="4"/>
<rect x="309" y="632" width="4" height="4"/>
<rect x="313" y="633" width="5" height="4"/>
<rect x="318" y="620" width="4" height="7"/>
<rect x="323" y="638" width="4" height="3"/>
<rect x="328" y="642" width="4" height="2"/>
<rect x="332" y="625" width="5" height="5"/>
<rect x="337" y="626" width="4" height="5"/>
<rect x="342" y="627" width="4" height="3"/>
<rect x="346" y="633" width="5" height="3"/>
<rect x="351" y="629" width="4" height="4"/>
<rect x="356" y="628" width="4" height="5"/>
<rect x="361" y="633" width="4" height="3"/>
<rect x="365" y="598" width="5" height="10"/>
<rect x="370" y="627" width="4" height="4"/>
<rect x="375" y="634" width="4" height="4"/>
<rect x="379" y="634" width="5" height="3"/>
<rect x="384" y="626" width="4" height="5"/>
<rect x="389" y="642" width="4" height="2"/>
<rect x="394" y="627" width="4" height="5"/>
<rect x="398" y="633" width="5" height="4"/>
<rect x="403" y="624" width="4" height="6"/>
<rect x="408" y="640" width="4" height="2"/>
<rect x="412" y="632" width="5" height="5"/>
<rect x="417" y="639" width="4" height="2"/>
<rect x="422" y="637" width="4" height="1"/>
<rect x="427" y="628" width="4" height="3"/>
<rect x="431" y="629" width="5" height="3"/>
<rect x="436" y="628" width="4" height="4"/>
<rect x="441" y="632" width="4" height="4"/>
<rect x="445" y="641" width="5" height="1"/>
<rect x="450" y="638" width="4" height="2"/>
<rect x="455" y="628" width="4" height="6"/>
<rect x="459" y="631" width="5" height="5"/>
<rect x="464" y="635" width="4" height="3"/>
<rect x="469" y="630" width="4" height="3"/>
<rect x="474" y="638" width="4" height="3"/>
<rect x="478" y="628" width="5" height="4"/>
<rect x="483" y="633" width="4" height="3"/>
<rect x="488" y="636" width="4" height="3"/>
<rect x="492" y="624" width="5" height="5"/>
<rect x="497" y="641" width="4" height="1"/>
<rect x="502" y="633" width="4" height="2"/>
<rect x="507" y="640" width="4" height="2"/>
<rect x="511" y="634" width="5" height="4"/>
<rect x="516" y="499" width="4" height="29"/>
<rect x="521" y="643" width="4" height="1"/>
<rect x="525" y="643" width="5" height="1"/>
<rect x="530" y="636" width="4" height="4"/>
<rect x="535" y="641" width="4" height="2"/>
<rect x="540" y="629" width="4" height="5"/>
<rect x="544" y="644" width="5" height="1"/>
<rect x="549" y="634" width="4" height="3"/>
<rect x="554" y="641" width="4" height="1"/>
<rect x="558" y="618" width="5" height="7"/>
<rect x="563" y="631" width="4" height="4"/>
<rect x="568" y="625" width="4" height="7"/>
<rect x="572" y="639" width="5" height="2"/>
<rect x="577" y="638" width="4" height="3"/>
<rect x="582" y="631" width="4" height="3"/>
<rect x="587" y="641" width="4" height="1"/>
<rect x="591" y="630" width="5" height="5"/>
<rect x="596" y="636" width="4" height="2"/>
<rect x="601" y="636" width="4" height="3"/>
<rect x="605" y="635" width="5" height="3"/>
<rect x="610" y="629" width="4" height="4"/>
<rect x="615" y="616" width="4" height="6"/>
<rect x="620" y="636" width="4" height="3"/>
<rect x="624" y="628" width="5" height="4"/>
<rect x="629" y="632" width="4" height="4"/>
<rect x="634" y="637" width="4" height="1"/>
<rect x="638" y="640" width="5" height="1"/>
<rect x="643" y="641" width="4" height="1"/>
<rect x="648" y="621" width="4" height="7"/>
<rect x="653" y="593" width="4" height="10"/>
<rect x="657" y="642" width="5" height="1"/>
<rect x="662" y="639" width="4" height="2"/>
<rect x="667" y="638" width="4" height="2"/>
<rect x="676" y="628" width="4" height="4"/>
<rect x="681" y="646" width="4" height="1"/>
<rect x="686" y="624" width="4" height="5"/>
<rect x="690" y="635" width="5" height="3"/>
<rect x="695" y="627" width="4" height="4"/>
<rect x="700" y="638" width="4" height="2"/>
<rect x="704" y="634" width="5" height="3"/>
<rect x="709" y="634" width="4" height="4"/>
<rect x="714" y="633" width="4" height="3"/>
<rect x="718" y="632" width="5" height="4"/>
<rect x="723" y="632" width="4" height="4"/>
<rect x="728" y="628" width="4" height="5"/>
<rect x="733" y="637" width="4" height="2"/>
<rect x="737" y="641" width="5" height="2"/>
<rect x="742" y="623" width="4" height="5"/>
<rect x="747" y="636" width="4" height="3"/>
<rect x="751" y="635" width="5" height="2"/>
<rect x="756" y="633" width="4" height="2"/>
<rect x="761" y="633" width="4" height="3"/>
<rect x="766" y="633" width="4" height="3"/>
<rect x="770" y="623" width="5" height="5"/>
<rect x="775" y="614" width="4" height="6"/>
<rect x="780" y="638" width="4" height="2"/>
<rect x="784" y="633" width="5" height="4"/>
<rect x="789" y="640" width="4" height="2"/>
<rect x="794" y="633" width="4" height="4"/>
<rect x="799" y="627" width="4" height="4"/>
<rect x="803" y="642" width="5" height="2"/>
<rect x="808" y="635" width="4" height="2"/>
<rect x="817" y="631" width="5" height="4"/>
<rect x="822" y="627" width="4" height="4"/>
<rect x="827" y="638" width="4" height="2"/>
<rect x="831" y="641" width="5" height="1"/>
<rect x="836" y="635" width="4" height="3"/>
<rect x="841" y="639" width="4" height="2"/>
<rect x="846" y="620" width="4" height="6"/>
<rect x="850" y="625" width="5" height="5"/>
<rect x="855" y="640" width="4" height="2"/>
<rect x="860" y="643" width="4" height="1"/>
<rect x="864" y="638" width="5" height="3"/>
<rect x="869" y="634" width="4" height="3"/>
<rect x="874" y="634" width="4" height="3"/>
<rect x="879" y="628" width="4" height="5"/>
<rect x="883" y="642" width="5" height="2"/>
<rect x="888" y="639" width="4" height="2"/>
<rect x="893" y="636" width="4" height="3"/>
<rect x="897" y="632" width="5" height="4"/>
<rect x="902" y="637" width="4" height="2"/>
<rect x="907" y="635" width="4" height="3"/>
<rect x="912" y="612" width="4" height="7"/>
<rect x="916" y="635" width="5" height="3"/>
<rect x="921" y="629" width="4" height="3"/>
<rect x="926" y="632" width="4" height="4"/>
<rect x="930" y="635" width="5" height="2"/>
<rect x="935" y="641" width="4" height="2"/>
</g>
<g fill="#00008f">
<rect x="69" y="637" width="4" height="11"/>
<rect x="73" y="621" width="5" height="27"/>
<rect x="78" y="639" width="4" height="9"/>
<rect x="83" y="637" width="4" height="11"/>
<rect x="87" y="638" width="5" height="10"/>
<rect x="92" y="624" width="4" height="24"/>
<rect x="97" y="628" width="4" height="20"/>
<rect x="102" y="634" width="4" height="14"/>
<rect x="106" y="637" width="5" height="11"/>
<rect x="111" y="638" width="4" height="10"/>
<rect x="116" y="628" width="4" height="20"/>
<rect x="120" y="637" width="5" height="11"/>
<rect x="125" y="639" width="4" height="9"/>
<rect x="130" y="628" width="4" height="20"/>
<rect x="135" y="641" width="4" height="7"/>
<rect x="139" y="638" width="5" height="10"/>
<rect x="144" y="639" width="4" height="9"/>
<rect x="149" y="642" width="4" height="6"/>
<rect x="153" y="631" width="5" height="17"/>
<rect x="158" y="631" width="4" height="17"/>
<rect x="163" y="637" width="4" height="11"/>
<rect x="168" y="632" width="4" height="16"/>
<rect x="172" y="637" width="5" height="11"/>
<rect x="177" y="637" width="4" height="11"/>
<rect x="182" y="638" width="4" height="10"/>
<rect x="186" y="643" width="5" height="5"/>
<rect x="191" y="638" width="4" height="10"/>
<rect x="196" y="637" width="4" height="11"/>
<rect x="200" y="637" width="5" height="11"/>
<rect x="205" y="640" width="4" height="8"/>
<rect x="210" y="629" width="4" height="19"/>
<rect x="215" y="635" width="4" height="13"/>
<rect x="219" y="639" width="5" height="9"/>
<rect x="224" y="546" width="4" height="102"/>
<rect x="229" y="642" width="4" height="6"/>
<rect x="233" y="637" width="5" height="11"/>
<rect x="238" y="639" width="4" height="9"/>
<rect x="243" y="639" width="4" height="9"/>
<rect x="248" y="636" width="4" height="12"/>
<rect x="252" y="631" width="5" height="17"/>
<rect x="257" y="637" width="4" height="11"/>
<rect x="262" y="643" width="4" height="5"/>
<rect x="266" y="633" width="5" height="15"/>
<rect x="271" y="620" width="4" height="28"/>
<rect x="276" y="640" width="4" height="8"/>
<rect x="281" y="635" width="4" height="13"/>
<rect x="285" y="636" width="5" height="12"/>
<rect x="290" y="639" width="4" height="9"/>
<rect x="295" y="637" width="4" height="11"/>
<rect x="299" y="634" width="5" height="14"/>
<rect x="304" y="635" width="4" height="13"/>
<rect x="309" y="636" width="4" height="12"/>
<rect x="313" y="637" width="5" height="11"/>
<rect x="318" y="627" width="4" height="21"/>
<rect x="323" y="641" width="4" height="7"/>
<rect x="328" y="644" width="4" height="4"/>
<rect x="332" y="630" width="5" height="18"/>
<rect x="337" y="631" width="4" height="17"/>
<rect x="342" y="630" width="4" height="18"/>
<rect x="346" y="636" width="5" height="12"/>
<rect x="351" y="633" width="4" height="15"/>
<rect x="356" y="633" width="4" height="15"/>
<rect x="361" y="636" width="4" height="12"/>
<rect x="365" y="608" width="5" height="40"/>
<rect x="370" y="631" width="4" height="17"/>
<rect x="375" y="638" width="4" height="10"/>
<rect x="379" y="637" width="5" height="11"/>
<rect x="384" y="631" width="4" height="17"/>
<rect x="389" y="644" width="4" height="4"/>
<rect x="394" y="632" width="4" height="16"/>
<rect x="398" y="637" width="5" height="11"/>
<rect x="403" y="630" width="4" height="18"/>
<rect x="408" y="642" width="4" height="6"/>
<rect x="412" y="637" width="5" height="11"/>
<rect x="417" y="641" width="4" height="7"/>
<rect x="422" y="638" width="4" height="10"/>
<rect x="427" y="631" width="4" height="17"/>
<rect x="431" y="632" width="5" height="16"/>
<rect x="436" y="632" width="4" height="16"/>
<rect x="441" y="636" width="4" height="12"/>
<rect x="445" y="642" width="5" height="6"/>
<rect x="450" y="640" width="4" height="8"/>
<rect x="455" y="634" width="4" height="14"/>
<rect x="459" y="636" width="5" height="12"/>
<rect x="464" y="638" width="4" height="10"/>
<rect x="469" y="633" width="4" height="15"/>
<rect x="474" y="641" width="4" height="7"/>
<rect x="478" y="632" width="5" height="16"/>
<rect x="483" y="636" width="4" height="12"/>
<rect x="488" y="639" width="4" height="9"/>
<rect x="492" y="629" width="5" height="19"/>
<rect x="497" y="642" width="4" height="6"/>
<rect x="502" y="635" width="4" height="13"/>
<rect x="507" y="642" width="4" height="6"/>
<rect x="511" y="638" width="5" height="10"/>
<rect x="516" y="528" width="4" height="120"/>
<rect x="521" y="644" width="4" height="4"/>
<rect x="525" y="644" width="5" height="4"/>
<rect x="530" y="640" width="4" height="8"/>
<rect x="535" y="643" width="4" height="5"/>
<rect x="540" y="634" width="4" height="14"/>
<rect x="544" y="645" width="5" height="3"/>
<rect x="549" y="637" width="4" height="11"/>
<rect x="554" y="642" width="4" height="6"/>
<rect x="558" y="625" width="5" height="23"/>
<rect x="563" y="635" width="4" height="13"/>
<rect x="568" y="632" width="4" height="16"/>
<rect x="572" y="641" width="5" height="7"/>
<rect x="577" y="641" width="4" height="7"/>
<rect x="582" y="634" width="4" height="14"/>
<rect x="587" y="642" width="4" height="6"/>
<rect x="591" y="635" width="5" height="13"/>
<rect x="596" y="638" width="4" height="10"/>
<rect x="601" y="639" width="4" height="9"/>
<rect x="605" y="638" width="5" height="10"/>
<rect x="610" y="633" width="4" height="15"/>
<rect x="615" y="622" width="4" height="26"/>
<rect x="620" y="639" width="4" height="9"/>
<rect x="624" y="632" width="5" height="16"/>
<rect x="629" y="636" width="4" height="12"/>
<rect x="634" y="638" width="4" height="10"/>
<rect x="638" y="641" width="5" height="7"/>
<rect x="643" y="642" width="4" height="6"/>
<rect x="648" y="628" width="4" height="20"/>
<rect x="653" y="603" width="4" height="45"/>
<rect x="657" y="643" width="5" height="5"/>
<rect x="662" y="641" width="4" height="7"/>
<rect x="667" y="640" width="4" height="8"/>
<rect x="676" y="632" width="4" height="16"/>
<rect x="681" y="647" width="4" height="1"/>
<rect x="686" y="629" width="4" height="19"/>
<rect x="690" y="638" width="5" height="10"/>
<rect x="695" y="631" width="4" height="17"/>
<rect x="700" y="640" width="4" height="8"/>
<rect x="704" y="637" width="5" height="11"/>
<rect x="709" y="638" width="4" height="10"/>
<rect x="714" y="636" width="4" height="12"/>
<rect x="718" y="636" width="5" height="12"/>
<rect x="723" y="636" width="4" height="12"/>
<rect x="728" y="633" width="4" height="15"/>
<rect x="733" y="639" width="4" height="9"/>
<rect x="737" y="643" width="5" height="5"/>
<rect x="742" y="628" width="4" height="20"/>
<rect x="747" y="639" width="4" height="9"/>
<rect x="751" y="637" width="5" height="11"/>
<rect x="756" y="635" width="4" height="13"/>
<rect x="761" y="636" width="4" height="12"/>
<rect x="766" y="636" width="4" height="12"/>
<rect x="770" y="628" width="5" height="20"/>
<rect x="775" y="620" width="4" height="28"/>
<rect x="780" y="640" width="4" height="8"/>
<rect x="784" y="637" width="5" height="11"/>
<rect x="789" y="642" width="4" height="6"/>
<rect x="794" y="637" width="4" height="11"/>
<rect x="799" y="631" width="4" height="17"/>
<rect x="803" y="644" width="5" height="4"/>
<rect x="808" y="637" width="4" height="11"/>
<rect x="813" y="645" width="4" height="3"/>
<rect x="817" y="635" width="5" height="13"/>
<rect x="822" y="631" width="4" height="17"/>
<rect x="827" y="640" width="4" height="8"/>
<rect x="831" y="642" width="5" height="6"/>
<rect x="836" y="638" width="4" height="10"/>
<rect x="841" y="641" width="4" height="7"/>
<rect x="846" y="626" width="4" height="22"/>
<rect x="850" y="630" width="5" height="18"/>
<rect x="855" y="642" width="4" height="6"/>
<rect x="860" y="644" width="4" height="4"/>
<rect x="864" y="641" width="5" height="7"/>
<rect x="869" y="637" width="4" height="11"/>
<rect x="874" y="637" width="4" height="11"/>
<rect x="879" y="633" width="4" height="15"/>
<rect x="883" y="644" width="5" height="4"/>
<rect x="888" y="641" width="4" height="7"/>
<rect x="893" y="639" width="4" height="9"/>
<rect x="897" y="636" width="5" height="12"/>
<rect x="902" y="639" width="4" height="9"/>
<rect x="907" y="638" width="4" height="10"/>
<rect x="912" y="619" width="4" height="29"/>
<rect x="916" y="638" width="5" height="10"/>
<rect x="921" y="632" width="4" height="16"/>
<rect x="926" y="636" width="4" height="12"/>
<rect x="930" y="637" width="5" height="11"/>
<rect x="935" y="643" width="4" height="5"/>
</g>
<g fill="#000">
<rect x="67" y="14" width="875" height="1"/>
<rect x="67" y="216" width="875" height="1"/>
<rect x="67" y="14" width="1" height="203"/>
<rect x="941" y="14" width="1" height="203"/>
<rect x="67" y="230" width="875" height="1"/>
<rect x="67" y="432" width="875" height="1"/>
<rect x="67" y="230" width="1" height="203"/>
<rect x="941" y="230" width="1" height="203"/>
<rect x="67" y="446" width="875" height="1"/>
<rect x="67" y="648" width="875" height="1"/>
<rect x="67" y="446" width="1" height="203"/>
<rect x="941" y="446" width="1" height="203"/>
</g>
</g>
<g font-size="10.67" text-anchor="end" fill="#000" stroke="#000" stroke-width="0.2">
<text x="61.5" y="219.9">0</text>
<text x="61.5" y="177.9">500</text>
<text x="61.5" y="135.9">1000</text>
<text x="61.5" y="94.9">1500</text>
<text x="61.5" y="52.9">2000</text>
<text x="61.5" y="435.9">0</text>
<text x="61.5" y="406.9">5</text>
<text x="61.5" y="378.9">10</text>
<text x="61.5" y="349.9">15</text>
<text x="61.5" y="320.9">20</text>
<text x="61.5" y="292.9">25</text>
<text x="61.5" y="263.9">30</text>
<text x="61.5" y="234.9">35</text>
<text x="61.5" y="650.7">0</text>
<text x="61.5" y="624.7">10</text>
<text x="61.5" y="599.7">20</text>
<text x="61.5" y="573.7">30</text>
<text x="61.5" y="548.7">40</text>
<text x="61.5" y="522.7">50</text>
<text x="61.5" y="497.7">60</text>
<text x="61.5" y="471.7">70</text>
</g>
<text transform="translate(25.6,116.1) rotate(-90) scale(0.970,1)" font-size="19.5" text-anchor="middle" fill="#000" stroke="#000" stroke-width="0.55"># mutations</text>
<text transform="translate(37.8,333.6) rotate(-90) scale(0.975,1)" font-size="19.5" text-anchor="middle" fill="#000" stroke="#000" stroke-width="0.55">Mb sequenced</text>
<text transform="translate(37.8,549.5) rotate(-90) scale(0.968,1)" font-size="19.5" text-anchor="middle" fill="#000" stroke="#000" stroke-width="0.55">mutations / Mb</text>
<g font-size="14.5" font-weight="bold">
<text x="818.3" y="40" fill="#45ff45">dbSNP</text>
<text x="818.3" y="59.5" fill="#800000">silent</text>
<text x="818.3" y="79.5" fill="#00008f">nonsilent</text>
</g>
<g font-size="13.7" text-anchor="end" fill="#000" stroke="#000" stroke-width="0.1">
<text transform="translate(75.0,666.3) rotate(-90) scale(1,1.12)">STAD-EG-62ZD-TP</text>
<text transform="translate(79.5,666.3) rotate(-90) scale(1,1.12)">STAD-NC-69D6-TP</text>
<text transform="translate(84.0,666.3) rotate(-90) scale(1,1.12)">STAD-PF-260E-TP</text>
<text transform="translate(89.0,666.3) rotate(-90) scale(1,1.12)">STAD-OD-96DH-TP</text>
<text transform="translate(93.5,666.3) rotate(-90) scale(1,1.12)">STAD-IS-70OC-TP</text>
<text transform="translate(98.0,666.3) rotate(-90) scale(1,1.12)">STAD-TL-728H-TP</text>
<text transform="translate(103.0,666.3) rotate(-90) scale(1,1.12)">STAD-GE-29MX-TP</text>
<text transform="translate(108.0,666.3) rotate(-90) scale(1,1.12)">STAD-3U-A9N5-TP</text>
<text transform="translate(112.5,666.3) rotate(-90) scale(1,1.12)">STAD-TP-893X-TP</text>
<text transform="translate(117.0,666.3) rotate(-90) scale(1,1.12)">STAD-97-33FT-TP</text>
<text transform="translate(122.0,666.3) rotate(-90) scale(1,1.12)">STAD-H8-67SE-TP</text>
<text transform="translate(126.5,666.3) rotate(-90) scale(1,1.12)">STAD-72-72VJ-TP</text>
<text transform="translate(131.0,666.3) rotate(-90) scale(1,1.12)">STAD-VW-A19U-TP</text>
<text transform="translate(136.0,666.3) rotate(-90) scale(1,1.12)">STAD-FR-893E-TP</text>
<text transform="translate(141.0,666.3) rotate(-90) scale(1,1.12)">STAD-4S-81DT-TP</text>
<text transform="translate(145.5,666.3) rotate(-90) scale(1,1.12)">STAD-WK-75B3-TP</text>
<text transform="translate(150.0,666.3) rotate(-90) scale(1,1.12)">STAD-SI-27DN-TP</text>
<text transform="translate(155.0,666.3) rotate(-90) scale(1,1.12)">STAD-FK-46Z5-TP</text>
<text transform="translate(159.5,666.3) rotate(-90) scale(1,1.12)">STAD-I3-869R-TP</text>
<text transform="translate(164.0,666.3) rotate(-90) scale(1,1.12)">STAD-YO-940W-TP</text>
<text transform="translate(169.0,666.3) rotate(-90) scale(1,1.12)">STAD-OO-31LJ-TP</text>
<text transform="translate(174.0,666.3) rotate(-90) scale(1,1.12)">STAD-SA-A7LQ-TP</text>
<text transform="translate(178.5,666.3) rotate(-90) scale(1,1.12)">STAD-UI-368X-TP</text>
<text transform="translate(183.0,666.3) rotate(-90) scale(1,1.12)">STAD-ZZ-99D3-TP</text>
<text transform="translate(188.0,666.3) rotate(-90) scale(1,1.12)">STAD-ZD-76G4-TP</text>
<text transform="translate(192.5,666.3) rotate(-90) scale(1,1.12)">STAD-KH-41N2-TP</text>
<text transform="translate(197.0,666.3) rotate(-90) scale(1,1.12)">STAD-AJ-69DG-TP</text>
<text transform="translate(202.0,666.3) rotate(-90) scale(1,1.12)">STAD-EN-91XB-TP</text>
<text transform="translate(206.5,666.3) rotate(-90) scale(1,1.12)">STAD-X6-72QW-TP</text>
<text transform="translate(211.0,666.3) rotate(-90) scale(1,1.12)">STAD-66-2153-TP</text>
<text transform="translate(216.0,666.3) rotate(-90) scale(1,1.12)">STAD-VQ-51JG-TP</text>
<text transform="translate(221.0,666.3) rotate(-90) scale(1,1.12)">STAD-N9-827B-TP</text>
<text transform="translate(225.5,666.3) rotate(-90) scale(1,1.12)">STAD-9T-628B-TP</text>
<text transform="translate(230.0,666.3) rotate(-90) scale(1,1.12)">STAD-KW-247X-TP</text>
<text transform="translate(235.0,666.3) rotate(-90) scale(1,1.12)">STAD-VO-4886-TP</text>
<text transform="translate(239.5,666.3) rotate(-90) scale(1,1.12)">STAD-M9-43ZO-TP</text>
<text transform="translate(244.0,666.3) rotate(-90) scale(1,1.12)">STAD-R6-85BB-TP</text>
<text transform="translate(249.0,666.3) rotate(-90) scale(1,1.12)">STAD-WX-53W2-TP</text>
<text transform="translate(254.0,666.3) rotate(-90) scale(1,1.12)">STAD-6M-23GO-TP</text>
<text transform="translate(258.5,666.3) rotate(-90) scale(1,1.12)">STAD-6W-634A-TP</text>
<text transform="translate(263.0,666.3) rotate(-90) scale(1,1.12)">STAD-6L-21YM-TP</text>
<text transform="translate(268.0,666.3) rotate(-90) scale(1,1.12)">STAD-5Z-75FZ-TP</text>
<text transform="translate(272.5,666.3) rotate(-90) scale(1,1.12)">STAD-BJ-22KI-TP</text>
<text transform="translate(277.0,666.3) rotate(-90) scale(1,1.12)">STAD-JI-824W-TP</text>
<text transform="translate(282.0,666.3) rotate(-90) scale(1,1.12)">STAD-I3-A0G7-TP</text>
<text transform="translate(287.0,666.3) rotate(-90) scale(1,1.12)">STAD-NS-43BQ-TP</text>
<text transform="translate(291.5,666.3) rotate(-90) scale(1,1.12)">STAD-2I-93UQ-TP</text>
<text transform="translate(296.0,666.3) rotate(-90) scale(1,1.12)">STAD-28-A537-TP</text>
<text transform="translate(301.0,666.3) rotate(-90) scale(1,1.12)">STAD-8B-38J7-TP</text>
<text transform="translate(305.5,666.3) rotate(-90) scale(1,1.12)">STAD-LJ-82AJ-TP</text>
<text transform="translate(310.0,666.3) rotate(-90) scale(1,1.12)">STAD-DU-89H9-TP</text>
<text transform="translate(315.0,666.3) rotate(-90) scale(1,1.12)">STAD-GD-9894-TP</text>
<text transform="translate(319.5,666.3) rotate(-90) scale(1,1.12)">STAD-G8-43RC-TP</text>
<text transform="translate(324.0,666.3) rotate(-90) scale(1,1.12)">STAD-4U-88BE-TP</text>
<text transform="translate(329.0,666.3) rotate(-90) scale(1,1.12)">STAD-R4-996M-TP</text>
<text transform="translate(334.0,666.3) rotate(-90) scale(1,1.12)">STAD-P9-9846-TP</text>
<text transform="translate(338.5,666.3) rotate(-90) scale(1,1.12)">STAD-I2-58M2-TP</text>
<text transform="translate(343.0,666.3) rotate(-90) scale(1,1.12)">STAD-EP-262U-TP</text>
<text transform="translate(348.0,666.3) rotate(-90) scale(1,1.12)">STAD-HJ-71NT-TP</text>
<text transform="translate(352.5,666.3) rotate(-90) scale(1,1.12)">STAD-5O-62QI-TP</text>
<text transform="translate(357.0,666.3) rotate(-90) scale(1,1.12)">STAD-OK-265K-TP</text>
<text transform="translate(362.0,666.3) rotate(-90) scale(1,1.12)">STAD-2M-78ZV-TP</text>
<text transform="translate(367.0,666.3) rotate(-90) scale(1,1.12)">STAD-BV-65FX-TP</text>
<text transform="translate(371.5,666.3) rotate(-90) scale(1,1.12)">STAD-YV-972B-TP</text>
<text transform="translate(376.0,666.3) rotate(-90) scale(1,1.12)">STAD-EH-99S6-TP</text>
<text transform="translate(381.0,666.3) rotate(-90) scale(1,1.12)">STAD-RC-41FQ-TP</text>
<text transform="translate(385.5,666.3) rotate(-90) scale(1,1.12)">STAD-QZ-34I1-TP</text>
<text transform="translate(390.0,666.3) rotate(-90) scale(1,1.12)">STAD-UF-3865-TP</text>
<text transform="translate(395.0,666.3) rotate(-90) scale(1,1.12)">STAD-ER-50L1-TP</text>
<text transform="translate(400.0,666.3) rotate(-90) scale(1,1.12)">STAD-OE-A1QF-TP</text>
<text transform="translate(404.5,666.3) rotate(-90) scale(1,1.12)">STAD-V2-513A-TP</text>
<text transform="translate(409.0,666.3) rotate(-90) scale(1,1.12)">STAD-9P-59IC-TP</text>
<text transform="translate(414.0,666.3) rotate(-90) scale(1,1.12)">STAD-LM-22QD-TP</text>
<text transform="translate(418.5,666.3) rotate(-90) scale(1,1.12)">STAD-S4-547N-TP</text>
<text transform="translate(423.0,666.3) rotate(-90) scale(1,1.12)">STAD-BQ-92RW-TP</text>
<text transform="translate(428.0,666.3) rotate(-90) scale(1,1.12)">STAD-M8-A0B6-TP</text>
<text transform="translate(433.0,666.3) rotate(-90) scale(1,1.12)">STAD-37-832G-TP</text>
<text transform="translate(437.5,666.3) rotate(-90) scale(1,1.12)">STAD-NO-966T-TP</text>
<text transform="translate(442.0,666.3) rotate(-90) scale(1,1.12)">STAD-WD-63IZ-TP</text>
<text transform="translate(447.0,666.3) rotate(-90) scale(1,1.12)">STAD-3K-30EQ-TP</text>
<text transform="translate(451.5,666.3) rotate(-90) scale(1,1.12)">STAD-SP-A1Y6-TP</text>
<text transform="translate(456.0,666.3) rotate(-90) scale(1,1.12)">STAD-KR-503L-TP</text>
<text transform="translate(461.0,666.3) rotate(-90) scale(1,1.12)">STAD-VU-80QX-TP</text>
<text transform="translate(465.5,666.3) rotate(-90) scale(1,1.12)">STAD-WL-40TN-TP</text>
<text transform="translate(470.0,666.3) rotate(-90) scale(1,1.12)">STAD-6R-A5YF-TP</text>
<text transform="translate(475.0,666.3) rotate(-90) scale(1,1.12)">STAD-AF-93P6-TP</text>
<text transform="translate(480.0,666.3) rotate(-90) scale(1,1.12)">STAD-CZ-51JZ-TP</text>
<text transform="translate(484.5,666.3) rotate(-90) scale(1,1.12)">STAD-F9-A4TO-TP</text>
<text transform="translate(489.0,666.3) rotate(-90) scale(1,1.12)">STAD-7J-39YU-TP</text>
<text transform="translate(494.0,666.3) rotate(-90) scale(1,1.12)">STAD-83-59JC-TP</text>
<text transform="translate(498.5,666.3) rotate(-90) scale(1,1.12)">STAD-BO-9276-TP</text>
<text transform="translate(503.0,666.3) rotate(-90) scale(1,1.12)">STAD-XG-20CI-TP</text>
<text transform="translate(508.0,666.3) rotate(-90) scale(1,1.12)">STAD-BP-779D-TP</text>
<text transform="translate(513.0,666.3) rotate(-90) scale(1,1.12)">STAD-E8-84A3-TP</text>
<text transform="translate(517.5,666.3) rotate(-90) scale(1,1.12)">STAD-6Q-917E-TP</text>
<text transform="translate(522.0,666.3) rotate(-90) scale(1,1.12)">STAD-O5-24PN-TP</text>
<text transform="translate(527.0,666.3) rotate(-90) scale(1,1.12)">STAD-SC-86E4-TP</text>
<text transform="translate(531.5,666.3) rotate(-90) scale(1,1.12)">STAD-QT-41JV-TP</text>
<text transform="translate(536.0,666.3) rotate(-90) scale(1,1.12)">STAD-7R-304D-TP</text>
<text transform="translate(541.0,666.3) rotate(-90) scale(1,1.12)">STAD-9S-235S-TP</text>
<text transform="translate(546.0,666.3) rotate(-90) scale(1,1.12)">STAD-MT-873H-TP</text>
<text transform="translate(550.5,666.3) rotate(-90) scale(1,1.12)">STAD-5E-27BS-TP</text>
<text transform="translate(555.0,666.3) rotate(-90) scale(1,1.12)">STAD-NN-97RY-TP</text>
<text transform="translate(560.0,666.3) rotate(-90) scale(1,1.12)">STAD-9Q-29FJ-TP</text>
<text transform="translate(564.5,666.3) rotate(-90) scale(1,1.12)">STAD-HX-626R-TP</text>
<text transform="translate(569.0,666.3) rotate(-90) scale(1,1.12)">STAD-BK-475Z-TP</text>
<text transform="translate(574.0,666.3) rotate(-90) scale(1,1.12)">STAD-TJ-A72Z-TP</text>
<text transform="translate(578.5,666.3) rotate(-90) scale(1,1.12)">STAD-HV-75YU-TP</text>
<text transform="translate(583.0,666.3) rotate(-90) scale(1,1.12)">STAD-HM-A5VZ-TP</text>
<text transform="translate(588.0,666.3) rotate(-90) scale(1,1.12)">STAD-EZ-A4QX-TP</text>
<text transform="translate(593.0,666.3) rotate(-90) scale(1,1.12)">STAD-3R-79EX-TP</text>
<text transform="translate(597.5,666.3) rotate(-90) scale(1,1.12)">STAD-SJ-A4GD-TP</text>
<text transform="translate(602.0,666.3) rotate(-90) scale(1,1.12)">STAD-UM-4416-TP</text>
<text transform="translate(607.0,666.3) rotate(-90) scale(1,1.12)">STAD-NF-66BZ-TP</text>
<text transform="translate(611.5,666.3) rotate(-90) scale(1,1.12)">STAD-S7-A62I-TP</text>
<text transform="translate(616.0,666.3) rotate(-90) scale(1,1.12)">STAD-62-A8IK-TP</text>
<text transform="translate(621.0,666.3) rotate(-90) scale(1,1.12)">STAD-QZ-64TQ-TP</text>
<text transform="translate(626.0,666.3) rotate(-90) scale(1,1.12)">STAD-ZH-4449-TP</text>
<text transform="translate(630.5,666.3) rotate(-90) scale(1,1.12)">STAD-87-32EN-TP</text>
<text transform="translate(635.0,666.3) rotate(-90) scale(1,1.12)">STAD-43-932V-TP</text>
<text transform="translate(640.0,666.3) rotate(-90) scale(1,1.12)">STAD-FL-38MP-TP</text>
<text transform="translate(644.5,666.3) rotate(-90) scale(1,1.12)">STAD-PX-68FU-TP</text>
<text transform="translate(649.0,666.3) rotate(-90) scale(1,1.12)">STAD-2Y-59MB-TP</text>
<text transform="translate(654.0,666.3) rotate(-90) scale(1,1.12)">STAD-RV-78NY-TP</text>
<text transform="translate(659.0,666.3) rotate(-90) scale(1,1.12)">STAD-I8-A7RX-TP</text>
<text transform="translate(663.5,666.3) rotate(-90) scale(1,1.12)">STAD-PY-93FR-TP</text>
<text transform="translate(668.0,666.3) rotate(-90) scale(1,1.12)">STAD-BI-771T-TP</text>
<text transform="translate(673.0,666.3) rotate(-90) scale(1,1.12)">STAD-AE-A645-TP</text>
<text transform="translate(677.5,666.3) rotate(-90) scale(1,1.12)">STAD-PG-7832-TP</text>
<text transform="translate(682.0,666.3) rotate(-90) scale(1,1.12)">STAD-G5-42J7-TP</text>
<text transform="translate(687.0,666.3) rotate(-90) scale(1,1.12)">STAD-IO-28CA-TP</text>
<text transform="translate(692.0,666.3) rotate(-90) scale(1,1.12)">STAD-93-A4IQ-TP</text>
<text transform="translate(696.5,666.3) rotate(-90) scale(1,1.12)">STAD-9M-21ET-TP</text>
<text transform="translate(701.0,666.3) rotate(-90) scale(1,1.12)">STAD-AT-74OA-TP</text>
<text transform="translate(706.0,666.3) rotate(-90) scale(1,1.12)">STAD-69-84UP-TP</text>
<text transform="translate(710.5,666.3) rotate(-90) scale(1,1.12)">STAD-2T-48PB-TP</text>
<text transform="translate(715.0,666.3) rotate(-90) scale(1,1.12)">STAD-2F-A0M5-TP</text>
<text transform="translate(720.0,666.3) rotate(-90) scale(1,1.12)">STAD-O7-531X-TP</text>
<text transform="translate(724.5,666.3) rotate(-90) scale(1,1.12)">STAD-ZM-A50X-TP</text>
<text transform="translate(729.0,666.3) rotate(-90) scale(1,1.12)">STAD-N7-A46E-TP</text>
<text transform="translate(734.0,666.3) rotate(-90) scale(1,1.12)">STAD-5O-44MO-TP</text>
<text transform="translate(739.0,666.3) rotate(-90) scale(1,1.12)">STAD-LO-54G5-TP</text>
<text transform="translate(743.5,666.3) rotate(-90) scale(1,1.12)">STAD-ZD-86DJ-TP</text>
<text transform="translate(748.0,666.3) rotate(-90) scale(1,1.12)">STAD-DD-40J0-TP</text>
<text transform="translate(753.0,666.3) rotate(-90) scale(1,1.12)">STAD-HF-362U-TP</text>
<text transform="translate(757.5,666.3) rotate(-90) scale(1,1.12)">STAD-95-35ML-TP</text>
<text transform="translate(762.0,666.3) rotate(-90) scale(1,1.12)">STAD-V4-A4YX-TP</text>
<text transform="translate(767.0,666.3) rotate(-90) scale(1,1.12)">STAD-RF-31AF-TP</text>
<text transform="translate(772.0,666.3) rotate(-90) scale(1,1.12)">STAD-NY-66H9-TP</text>
<text transform="translate(776.5,666.3) rotate(-90) scale(1,1.12)">STAD-D6-641F-TP</text>
<text transform="translate(781.0,666.3) rotate(-90) scale(1,1.12)">STAD-MU-4582-TP</text>
<text transform="translate(786.0,666.3) rotate(-90) scale(1,1.12)">STAD-PZ-67B0-TP</text>
<text transform="translate(790.5,666.3) rotate(-90) scale(1,1.12)">STAD-ED-A6C3-TP</text>
<text transform="translate(795.0,666.3) rotate(-90) scale(1,1.12)">STAD-XR-53EV-TP</text>
<text transform="translate(800.0,666.3) rotate(-90) scale(1,1.12)">STAD-UR-69CQ-TP</text>
<text transform="translate(805.0,666.3) rotate(-90) scale(1,1.12)">STAD-OG-50EB-TP</text>
<text transform="translate(809.5,666.3) rotate(-90) scale(1,1.12)">STAD-37-87YQ-TP</text>
<text transform="translate(814.0,666.3) rotate(-90) scale(1,1.12)">STAD-TJ-37LA-TP</text>
<text transform="translate(819.0,666.3) rotate(-90) scale(1,1.12)">STAD-XF-45U3-TP</text>
<text transform="translate(823.5,666.3) rotate(-90) scale(1,1.12)">STAD-P2-93ZK-TP</text>
<text transform="translate(828.0,666.3) rotate(-90) scale(1,1.12)">STAD-UK-2049-TP</text>
<text transform="translate(833.0,666.3) rotate(-90) scale(1,1.12)">STAD-FN-71EQ-TP</text>
<text transform="translate(837.5,666.3) rotate(-90) scale(1,1.12)">STAD-LO-2652-TP</text>
<text transform="translate(842.0,666.3) rotate(-90) scale(1,1.12)">STAD-HS-363P-TP</text>
<text transform="translate(847.0,666.3) rotate(-90) scale(1,1.12)">STAD-QQ-54RX-TP</text>
<text transform="translate(852.0,666.3) rotate(-90) scale(1,1.12)">STAD-PP-47PL-TP</text>
<text transform="translate(856.5,666.3) rotate(-90) scale(1,1.12)">STAD-EZ-34MU-TP</text>
<text transform="translate(861.0,666.3) rotate(-90) scale(1,1.12)">STAD-OG-5367-TP</text>
<text transform="translate(866.0,666.3) rotate(-90) scale(1,1.12)">STAD-6O-80GA-TP</text>
<text transform="translate(870.5,666.3) rotate(-90) scale(1,1.12)">STAD-OH-85CS-TP</text>
<text transform="translate(875.0,666.3) rotate(-90) scale(1,1.12)">STAD-X8-A3ME-TP</text>
<text transform="translate(880.0,666.3) rotate(-90) scale(1,1.12)">STAD-GW-37QA-TP</text>
<text transform="translate(885.0,666.3) rotate(-90) scale(1,1.12)">STAD-JC-40XV-TP</text>
<text transform="translate(889.5,666.3) rotate(-90) scale(1,1.12)">STAD-AU-44CN-TP</text>
<text transform="translate(894.0,666.3) rotate(-90) scale(1,1.12)">STAD-EN-75LT-TP</text>
<text transform="translate(899.0,666.3) rotate(-90) scale(1,1.12)">STAD-E2-A794-TP</text>
<text transform="translate(903.5,666.3) rotate(-90) scale(1,1.12)">STAD-FK-269J-TP</text>
<text transform="translate(908.0,666.3) rotate(-90) scale(1,1.12)">STAD-T2-740S-TP</text>
<text transform="translate(913.0,666.3) rotate(-90) scale(1,1.12)">STAD-2B-A4W0-TP</text>
<text transform="translate(918.0,666.3) rotate(-90) scale(1,1.12)">STAD-NA-63ZZ-TP</text>
<text transform="translate(922.5,666.3) rotate(-90) scale(1,1.12)">STAD-FZ-721H-TP</text>
<text transform="translate(927.0,666.3) rotate(-90) scale(1,1.12)">STAD-AD-67KI-TP</text>
<text transform="translate(932.0,666.3) rotate(-90) scale(1,1.12)">STAD-X8-92ZF-TP</text>
<text transform="translate(936.5,666.3) rotate(-90) scale(1,1.12)">STAD-K9-32WS-TP</text>
<text transform="translate(941.0,666.3) rotate(-90) scale(1,1.12)">STAD-7M-31GY-TP</text>
</g>
</svg></body></html>
